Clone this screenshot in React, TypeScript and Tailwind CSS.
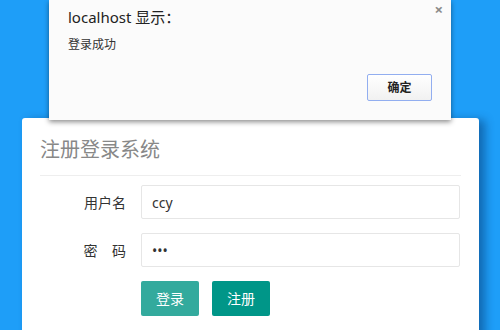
import React from 'react';

const font = { fontFamily: '"Noto Sans", "Noto Sans CJK SC", sans-serif' };

function AlertDialog() {
  return (
    <div className="absolute left-[49px] top-0 z-10 h-[120px] w-[402px] bg-[#fbfbfb] shadow-[0_2px_5px_rgba(0,0,0,0.45)]">
      <button className="absolute right-[8px] top-[2px] text-[15px] leading-[14px] font-bold text-[#8a8a8a]">×</button>
      <div className="pl-[19px] pt-[6px] text-[15px] leading-[22px] text-[#222]">localhost 显示：</div>
      <div className="pl-[19px] pt-[8px] text-[12px] leading-[18px] text-[#333]">登录成功</div>
      <div className="flex justify-end pr-[19px] pt-[20px]">
        <button className="h-[27px] w-[65px] rounded-[2px] border border-[#92aef0] bg-gradient-to-b from-[#ffffff] to-[#f1f1f1] text-[12px] font-bold text-[#222]">
          确定
        </button>
      </div>
    </div>
  );
}

function Field({ label, children }: { label: React.ReactNode; children: React.ReactNode }) {
  return (
    <div className="flex items-center">
      <div className="w-[101px] pr-[15px] text-right text-[14px] text-[#333]">{label}</div>
      {children}
    </div>
  );
}

export default function App() {
  return (
    <div className="relative h-[330px] w-[500px] overflow-hidden bg-[#1e9ef8]" style={font}>
      <AlertDialog />
      <div className="ml-[22px] mt-[118px] h-[240px] w-[457px] rounded-[3px] bg-white px-[18px] shadow-[6px_2px_10px_rgba(0,40,90,0.45)]">
        <div className="flex h-[58px] items-center pt-[6px] border-b border-[#eeeeee] text-[20px] text-[#888]">注册登录系统</div>
        <div className="mt-[9px] flex flex-col gap-[14px]">
          <Field label="用户名">
            <input
              readOnly
              value="ccy"
              className="h-[34px] w-[319px] rounded-[2px] border border-[#e6e6e6] px-[10px] text-[14px] text-[#333] outline-none"
            />
          </Field>
          <Field label={<span>密&nbsp;&nbsp;&nbsp;&nbsp;码</span>}>
            <input
              readOnly
              type="password"
              value="123"
              className="h-[34px] w-[319px] rounded-[2px] border border-[#e6e6e6] px-[10px] text-[14px] text-[#333] outline-none"
            />
          </Field>
          <div className="flex gap-[13px] pl-[101px]">
            <button className="h-[35px] w-[58px] rounded-[2px] bg-[#33aa9d] text-[14px] text-white">登录</button>
            <button className="h-[35px] w-[58px] rounded-[2px] bg-[#009688] text-[14px] text-white">注册</button>
          </div>
        </div>
      </div>
    </div>
  );
}
